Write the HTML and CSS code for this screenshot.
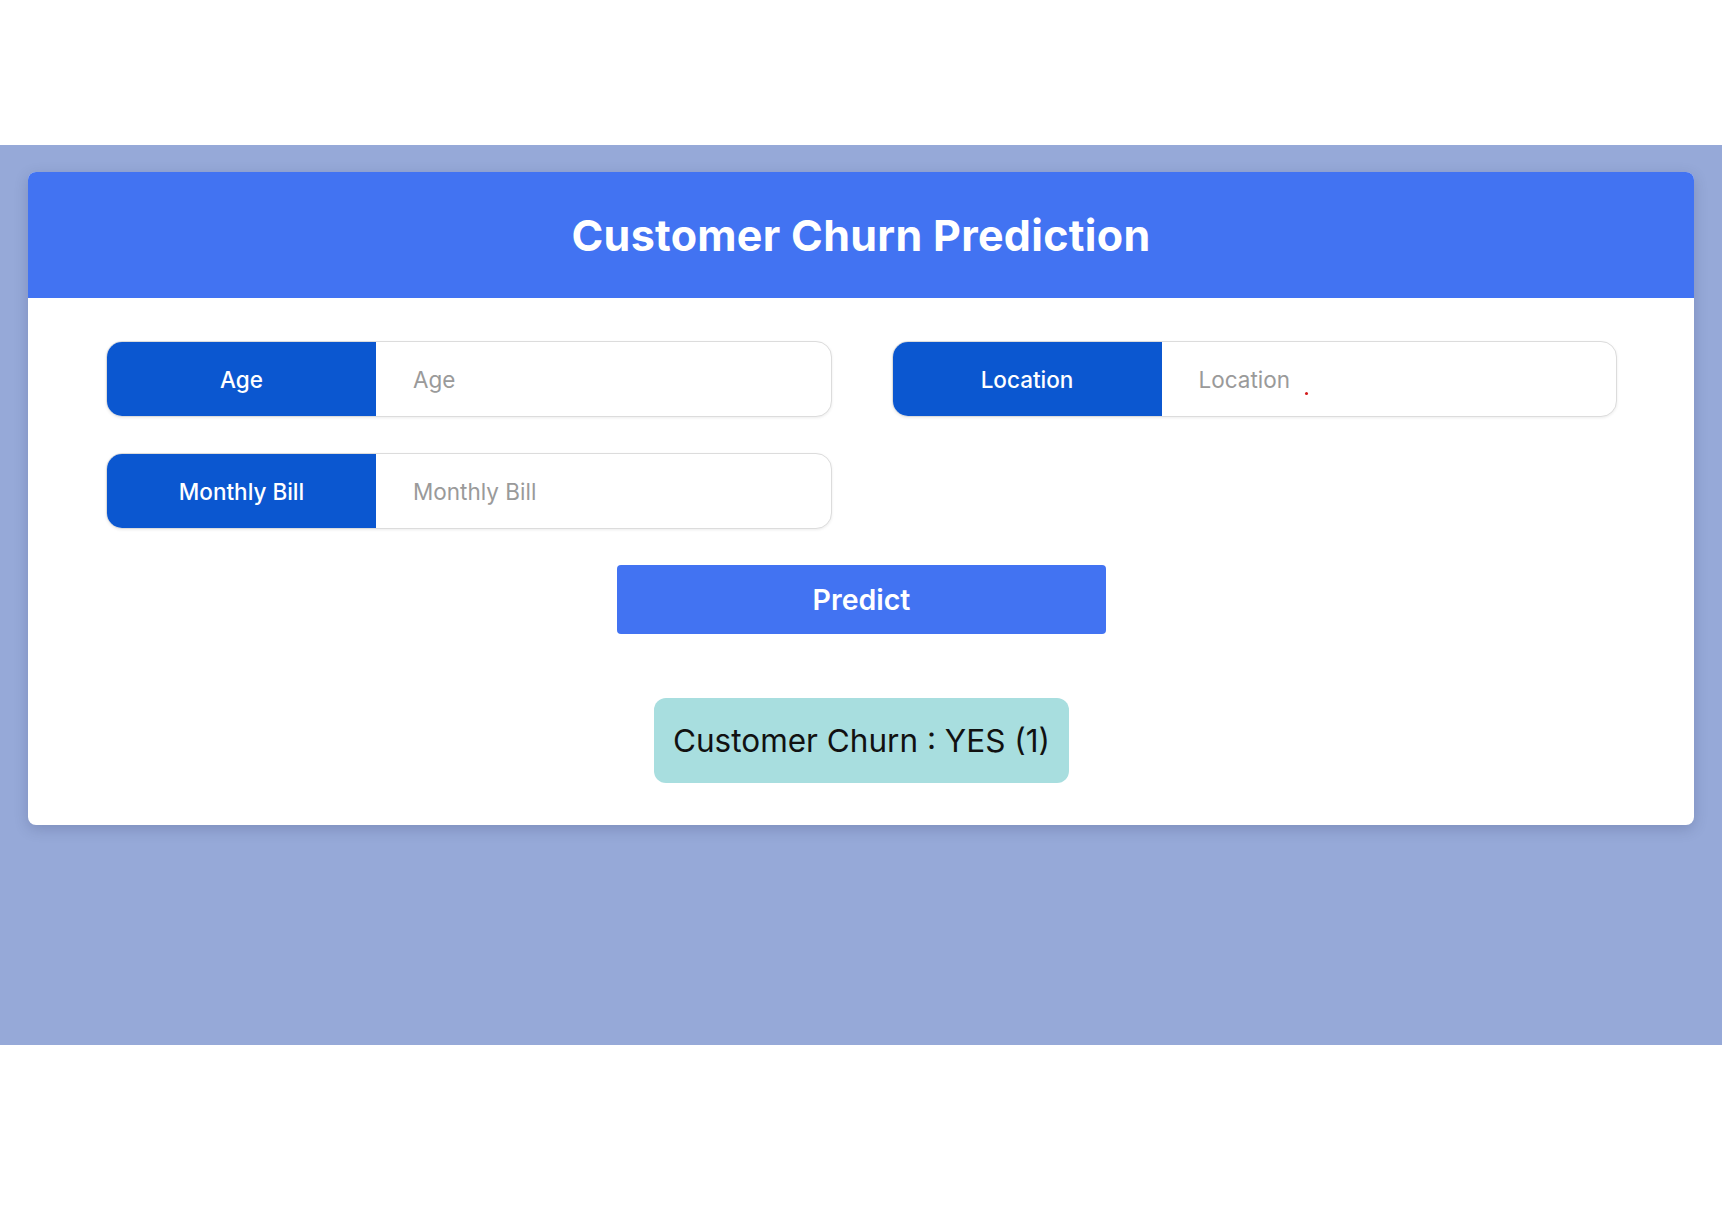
FILE: index.html
```html
<!DOCTYPE html>
<html lang="en">
<head>
<meta charset="utf-8">
<title>Customer Churn Prediction</title>
<link rel="stylesheet" href="styles.css">
</head>
<body>
<main class="band">
  <div class="card">
    <header class="card-header">
      <h1 class="title">Customer Churn Prediction</h1>
    </header>
    <form class="card-body">
      <div class="fields">
        <div class="group">
          <span class="group-label">Age</span>
          <input class="group-input" type="text" placeholder="Age">
        </div>
        <div class="group">
          <span class="group-label">Location</span>
          <div class="input-wrap">
            <input class="group-input" type="text" placeholder="Location">
            <span class="red-dot"></span>
          </div>
        </div>
        <div class="group">
          <span class="group-label">Monthly Bill</span>
          <input class="group-input" type="text" placeholder="Monthly Bill">
        </div>
      </div>
      <button class="predict" type="button">Predict</button>
      <div class="result">Customer Churn : YES (1)</div>
    </form>
  </div>
</main>
</body>
</html>
```

FILE: styles.css
```css
* { box-sizing: border-box; }

html, body {
  margin: 0;
  padding: 0;
  background: #ffffff;
  font-family: Inter, "Open Sans", sans-serif;
}

body {
  padding-top: 145px;
  height: 1217px;
}

.band {
  background: #96a9d8;
  height: 900px;
  padding: 27px 28px 0 28px;
}

.card {
  background: #ffffff;
  border-radius: 8px;
  box-shadow: 0 4px 14px rgba(40, 50, 90, 0.22);
  overflow: hidden;
}

.card-header {
  background: #4273f2;
  height: 126px;
  display: flex;
  align-items: center;
  justify-content: center;
}

.title {
  margin: 0;
  color: #ffffff;
  font-size: 43px;
  font-weight: 700;
  letter-spacing: 0.3px;
}

.card-body {
  display: flex;
  flex-direction: column;
  align-items: center;
  padding: 43px 77px 42px 78px;
}

.fields {
  width: 100%;
  display: grid;
  grid-template-columns: 1fr 1fr;
  column-gap: 60px;
  row-gap: 36px;
}

.group {
  display: flex;
  height: 76px;
  border-radius: 16px;
  border: 1px solid #dcdcdc;
  box-shadow: 0 1px 3px rgba(0, 0, 0, 0.08);
  overflow: hidden;
  background: #ffffff;
}

.group-label {
  flex: 0 0 269px;
  background: #0b57d0;
  color: #ffffff;
  display: flex;
  align-items: center;
  justify-content: center;
  font-size: 22.5px;
  font-weight: 500;
}

.input-wrap {
  flex: 1;
  display: flex;
  position: relative;
}

.group-input {
  flex: 1;
  min-width: 0;
  border: none;
  outline: none;
  padding: 0 0 0 37px;
  font-family: Inter, "Open Sans", sans-serif;
  font-size: 22.5px;
  color: #333;
  background: transparent;
}

.group-input::placeholder {
  color: #9a9a9a;
}

.red-dot {
  position: absolute;
  left: 143px;
  top: 50px;
  width: 3px;
  height: 3px;
  border-radius: 50%;
  background: #d21a1a;
}

.predict {
  margin-top: 36px;
  width: 489px;
  height: 69px;
  border: none;
  border-radius: 4px;
  background: #4273f2;
  color: #ffffff;
  font-family: Inter, "Open Sans", sans-serif;
  font-size: 28.5px;
  font-weight: 600;
}

.result {
  margin-top: 64px;
  width: 415px;
  height: 85px;
  border-radius: 12px;
  background: #a8dedf;
  color: #111;
  display: flex;
  align-items: center;
  justify-content: center;
  font-size: 31.5px;
  font-weight: 400;
}
```
